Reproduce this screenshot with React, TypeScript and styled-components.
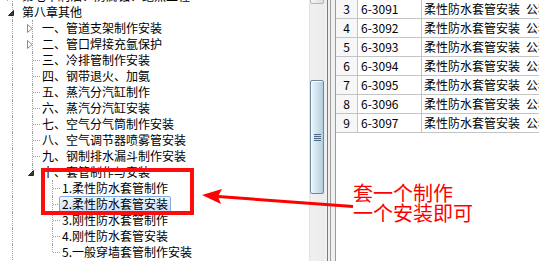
import styled, { createGlobalStyle } from 'styled-components';

const GlobalStyle = createGlobalStyle`
  html, body { margin: 0; padding: 0; background: #fff; }
  body { font-family: "Noto Sans CJK SC", "Noto Sans", sans-serif; }
`;

const Screen = styled.div`
  position: relative;
  display: flex;
  width: 539px;
  height: 261px;
  overflow: hidden;
  background: #fff;
  font-family: "Noto Sans CJK SC", "Noto Sans", sans-serif;
  font-size: 12px;
  color: #000;
`;

/* ---------- tree ---------- */

const TreePane = styled.div`
  width: 309px;
  flex-shrink: 0;
  overflow: hidden;
  background: #fff;
`;

const TreeList = styled.div`
  display: flex;
  flex-direction: column;
  margin-top: -12px;
`;

const Row = styled.div`
  display: flex;
  height: 16px;
  white-space: nowrap;
`;

type LineKind = 'none' | 'through' | 'end';

const Guide = styled.span<{ $line: LineKind; $stub?: boolean }>`
  position: relative;
  width: 20px;
  flex-shrink: 0;
  &::before {
    content: '';
    display: ${(p) => (p.$line === 'none' ? 'none' : 'block')};
    position: absolute;
    left: 12px;
    top: 0;
    height: ${(p) => (p.$line === 'end' ? '8px' : '16px')};
    border-left: 1px dotted #a0a0a0;
  }
  &::after {
    content: '';
    display: ${(p) => (p.$stub ? 'block' : 'none')};
    position: absolute;
    left: 13px;
    top: 8px;
    width: 7px;
    border-top: 1px dotted #a0a0a0;
  }
`;

const Expander = styled.svg<{ $open?: boolean }>`
  position: absolute;
  left: ${(p) => (p.$open ? '8px' : '7px')};
  top: ${(p) => (p.$open ? '6px' : '4px')};
  z-index: 1;
`;

const Label = styled.span<{ $selected?: boolean }>`
  margin-left: -1px;
  padding: 0 2px;
  height: 16px;
  line-height: 14px;
  box-sizing: border-box;
  border: 1px solid ${(p) => (p.$selected ? '#84acdd' : 'transparent')};
  border-radius: 2px;
  background: ${(p) => (p.$selected ? 'linear-gradient(#eef5fd, #cfe3fa)' : 'transparent')};
`;

/* ---------- scrollbar + splitter ---------- */

const ScrollTrack = styled.div`
  width: 16px;
  flex-shrink: 0;
  display: flex;
  flex-direction: column;
  align-items: center;
  background: linear-gradient(to right, #e2e2e2, #f0f0f0 2px, #ececec);
`;

const ScrollButton = styled.div`
  width: 14px;
  height: 17px;
  margin-top: -13px;
  box-sizing: border-box;
  border: 1px solid #b5b5b5;
  border-radius: 2px;
  background: linear-gradient(to right, #f6f6f6, #dddddd);
`;

const Thumb = styled.div`
  margin-top: 76px;
  width: 14px;
  height: 114px;
  box-sizing: border-box;
  border: 1px solid #6e879d;
  border-radius: 2px;
  background: linear-gradient(to right, #eef5fa, #d4e5f0 45%, #b3cddd);
  box-shadow: inset 1px 1px 0 #f8fbfd;
  display: flex;
  align-items: center;
  justify-content: center;
`;

const Grip = styled.span`
  width: 7px;
  height: 7px;
  background: repeating-linear-gradient(to bottom, #4d6a80 0 1px, #c9dbe7 1px 2px);
`;

const Splitter = styled.div`
  width: 10px;
  flex-shrink: 0;
  display: flex;
  padding-left: 2px;
  box-sizing: border-box;
  background: #f0f0f0;
`;

const SplitterLines = styled.div`
  width: 4px;
  box-sizing: border-box;
  border-left: 1px solid #7b7b7b;
  border-right: 1px solid #9c9c9c;
`;

/* ---------- grid ---------- */

const GridPane = styled.div`
  flex: 1;
  overflow: hidden;
  border-left: 1px solid #9a9a9a;
  background: #fff;
`;

const GridRow = styled.div`
  display: grid;
  grid-template-columns: 22px 64px 1fr;
  height: 19px;
`;

const Cell = styled.div<{ $head?: boolean }>`
  box-sizing: border-box;
  border-right: 1px solid #c4c4c4;
  border-bottom: 1px solid #c4c4c4;
  padding: 0 ${(p) => (p.$head ? '0' : '3px')};
  line-height: 18px;
  white-space: nowrap;
  overflow: hidden;
  text-align: ${(p) => (p.$head ? 'center' : 'left')};
  background: ${(p) => (p.$head ? '#f7f7f7' : '#fff')};
`;

const NameCell = styled(Cell)`
  border-right: none;
  padding-left: 2px;
`;

/* ---------- annotations ---------- */

const Callout = styled.div`
  position: absolute;
  left: 41px;
  top: 168px;
  width: 153px;
  height: 47px;
  box-sizing: border-box;
  border: 4px solid #ff0d0d;
  pointer-events: none;
`;

const ArrowLayer = styled.svg`
  position: absolute;
  left: 0;
  top: 0;
  pointer-events: none;
`;

const Note = styled.div`
  position: absolute;
  left: 353px;
  top: 183px;
  color: #ff0000;
  font-size: 20px;
  line-height: 20px;
  white-space: nowrap;
`;

type Node = {
  text: string;
  guides: LineKind[];
  own: LineKind;
  expander?: 'open' | 'closed';
  selected?: boolean;
};

const L1 = (text: string, own: LineKind = 'through', expander?: 'open' | 'closed'): Node => ({
  text,
  guides: ['through'],
  own,
  expander,
});

const L2 = (text: string, own: LineKind = 'through', selected = false): Node => ({
  text,
  guides: ['through', 'none'],
  own,
  selected,
});

const tree: Node[] = [
  { text: '第七章刷油、防腐蚀、绝热工程', guides: [], own: 'through', expander: 'closed' },
  { text: '第八章其他', guides: [], own: 'through', expander: 'open' },
  L1('一、管道支架制作安装', 'through', 'closed'),
  L1('二、管口焊接充氩保护', 'through', 'closed'),
  L1('三、冷排管制作安装'),
  L1('四、钢带退火、加氨'),
  L1('五、蒸汽分汽缸制作'),
  L1('六、蒸汽分汽缸安装'),
  L1('七、空气分气筒制作安装'),
  L1('八、空气调节器喷雾管安装'),
  L1('九、钢制排水漏斗制作安装'),
  L1('十、套管制作与安装', 'end', 'open'),
  L2('1.柔性防水套管制作'),
  L2('2.柔性防水套管安装', 'through', true),
  L2('3.刚性防水套管制作'),
  L2('4.刚性防水套管安装'),
  L2('5.一般穿墙套管制作安装', 'end'),
];

const rows = [
  ['3', '6-3091'],
  ['4', '6-3092'],
  ['5', '6-3093'],
  ['6', '6-3094'],
  ['7', '6-3095'],
  ['8', '6-3096'],
  ['9', '6-3097'],
];

function ExpanderIcon({ open }: { open: boolean }) {
  if (open) {
    return (
      <Expander $open width="6" height="6" viewBox="0 0 6 6">
        <polygon points="5.5,0.5 5.5,5.5 0.5,5.5" fill="#3c3c3c" stroke="#262626" strokeWidth="1" />
      </Expander>
    );
  }
  return (
    <Expander width="6" height="9" viewBox="0 0 6 9">
      <polygon points="0.5,0.5 5,4.5 0.5,8.5" fill="#fff" stroke="#8a8a8a" strokeWidth="1" />
    </Expander>
  );
}

export default function App() {
  return (
    <Screen>
      <GlobalStyle />
      <TreePane>
        <TreeList>
          {tree.map((node) => (
            <Row key={node.text}>
              {node.guides.map((g, i) => (
                <Guide key={i} $line={g} />
              ))}
              <Guide $line={node.own} $stub={!node.expander}>
                {node.expander && <ExpanderIcon open={node.expander === 'open'} />}
              </Guide>
              <Label $selected={node.selected}>{node.text}</Label>
            </Row>
          ))}
        </TreeList>
      </TreePane>
      <ScrollTrack>
        <ScrollButton />
        <Thumb>
          <Grip />
        </Thumb>
      </ScrollTrack>
      <Splitter>
        <SplitterLines />
      </Splitter>
      <GridPane>
        {rows.map(([no, code]) => (
          <GridRow key={no}>
            <Cell $head>{no}</Cell>
            <Cell>{code}</Cell>
            <NameCell>柔性防水套管安装{'\u2002'}公称直径(mm以内) 50</NameCell>
          </GridRow>
        ))}
      </GridPane>

      <Callout />
      <ArrowLayer width="539" height="261" viewBox="0 0 539 261">
        <line x1="218" y1="196.5" x2="353" y2="206.5" stroke="#ff0000" strokeWidth="3" />
        <polygon points="202,195 222,189 218,196.5 221,204" fill="#ff0000" />
      </ArrowLayer>
      <Note>
        套一个制作
        <br />
        一个安装即可
      </Note>
    </Screen>
  );
}
